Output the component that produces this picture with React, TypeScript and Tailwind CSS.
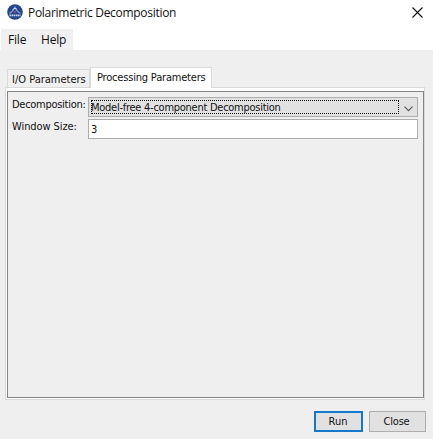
import type { ReactNode } from 'react';

function AppLogo() {
  return (
    <svg className="h-4 w-4 shrink-0" viewBox="0 0 16 16">
      <circle cx="8" cy="8" r="7.8" fill="#24468f" />
      <path d="M2.5 9.2Q5.5 8 8 3.2Q10.2 8 13.5 9.2" fill="none" stroke="#8fa9da" strokeWidth="1.1" />
      <path d="M5.5 5.8L8 4.2L10 5.3" fill="none" stroke="#dbe4f5" strokeWidth="0.8" />
      <circle cx="8" cy="7.8" r="1" fill="#b8485f" />
      <path d="M2.5 11.3H13.5" stroke="#c9d5ee" strokeWidth="1.7" strokeDasharray="1.6 .5" />
    </svg>
  );
}

function Label({ children }: { children: ReactNode }) {
  return <label className="w-20 shrink-0 pl-1 leading-[15px] tracking-[-0.28px]">{children}</label>;
}

export default function App() {
  return (
    <div className="flex h-[439px] w-[433px] flex-col overflow-hidden bg-[#efefef] font-['DejaVu_Sans_Condensed','Noto_Sans',sans-serif] text-[11px] leading-[15px] whitespace-nowrap text-[#111]">
      <header className="h-[50px] bg-white font-['Open_Sans','Noto_Sans',sans-serif]">
        <div className="flex h-[29px] items-start pt-1 pl-[7px]">
          <AppLogo />
          <h1 className="ml-[5px] text-[12px] leading-[18px] tracking-[-0.29px]">Polarimetric Decomposition</h1>
          <svg className="mt-[3px] mr-[10px] ml-auto h-[11px] w-[11px]" viewBox="0 0 11 11">
            <path d="M.5 .5L10.5 10.5M10.5 .5L.5 10.5" stroke="#111" strokeWidth="1.1" />
          </svg>
        </div>
        <nav className="ml-px flex h-[21px] w-[72px] bg-[#f0f0f0] pt-[3px] pl-[7px] text-[12px] leading-[16px] tracking-[-0.2px]">
          <span className="w-[33px]">File</span>
          <span>Help</span>
        </nav>
      </header>

      <div className="mt-[17px] flex h-[20px] items-end pl-[7px]">
        <div className="h-[18px] w-[83px] border border-b-0 border-[#dadada] pt-[2px] pl-1">I/O Parameters</div>
        <div className="relative -mb-px h-[21px] w-[122px] border border-b-0 border-[#dadada] bg-white pt-[2px] pl-[6px] tracking-[-0.19px]">Processing Parameters</div>
      </div>

      <main className="ml-[5px] h-[313px] w-[420px] border border-[#dadada] bg-white pt-[3px] pr-0 pb-px pl-px">
        <div className="h-[307px] w-[417px] border border-[#858585] bg-[#efefef] pt-[5px]">
          <div className="flex h-[22px] items-start">
            <Label>Decomposition:</Label>
            <div className="flex h-5 w-[330px] border border-[#adadad] bg-[#e1e1e1] pt-[2px] pl-[2px]">
              <span className="h-[14px] w-[308px] border border-dotted border-black leading-[13px] tracking-[-0.26px]"><span className="-ml-px">Model-free 4-component Decomposition</span></span>
              <svg className="mt-[6px] ml-[5px] h-[6px] w-[9px]" viewBox="0 0 9 6">
                <path d="M.5 .7L4.5 4.7L8.5 .7" fill="none" stroke="#555" strokeWidth="1.1" />
              </svg>
            </div>
          </div>
          <div className="flex">
            <Label><span className="tracking-[-0.08px]">Window Size:</span></Label>
            <div className="h-5 w-[330px] border border-[#adadad] bg-white pt-[2px] pl-[2px]">3</div>
          </div>
        </div>
      </main>

      <footer className="mt-[11px] ml-[314px] flex gap-[6px]">
        <button className="h-[21px] w-[49px] border-2 border-[#1479cc] bg-[#e1e1e1] pr-px leading-[17px]">Run</button>
        <button className="h-[21px] w-[57px] border border-[#adadad] bg-[#e1e1e1] pr-[2px] leading-[18px] tracking-[-0.2px]">Close</button>
      </footer>
    </div>
  );
}
